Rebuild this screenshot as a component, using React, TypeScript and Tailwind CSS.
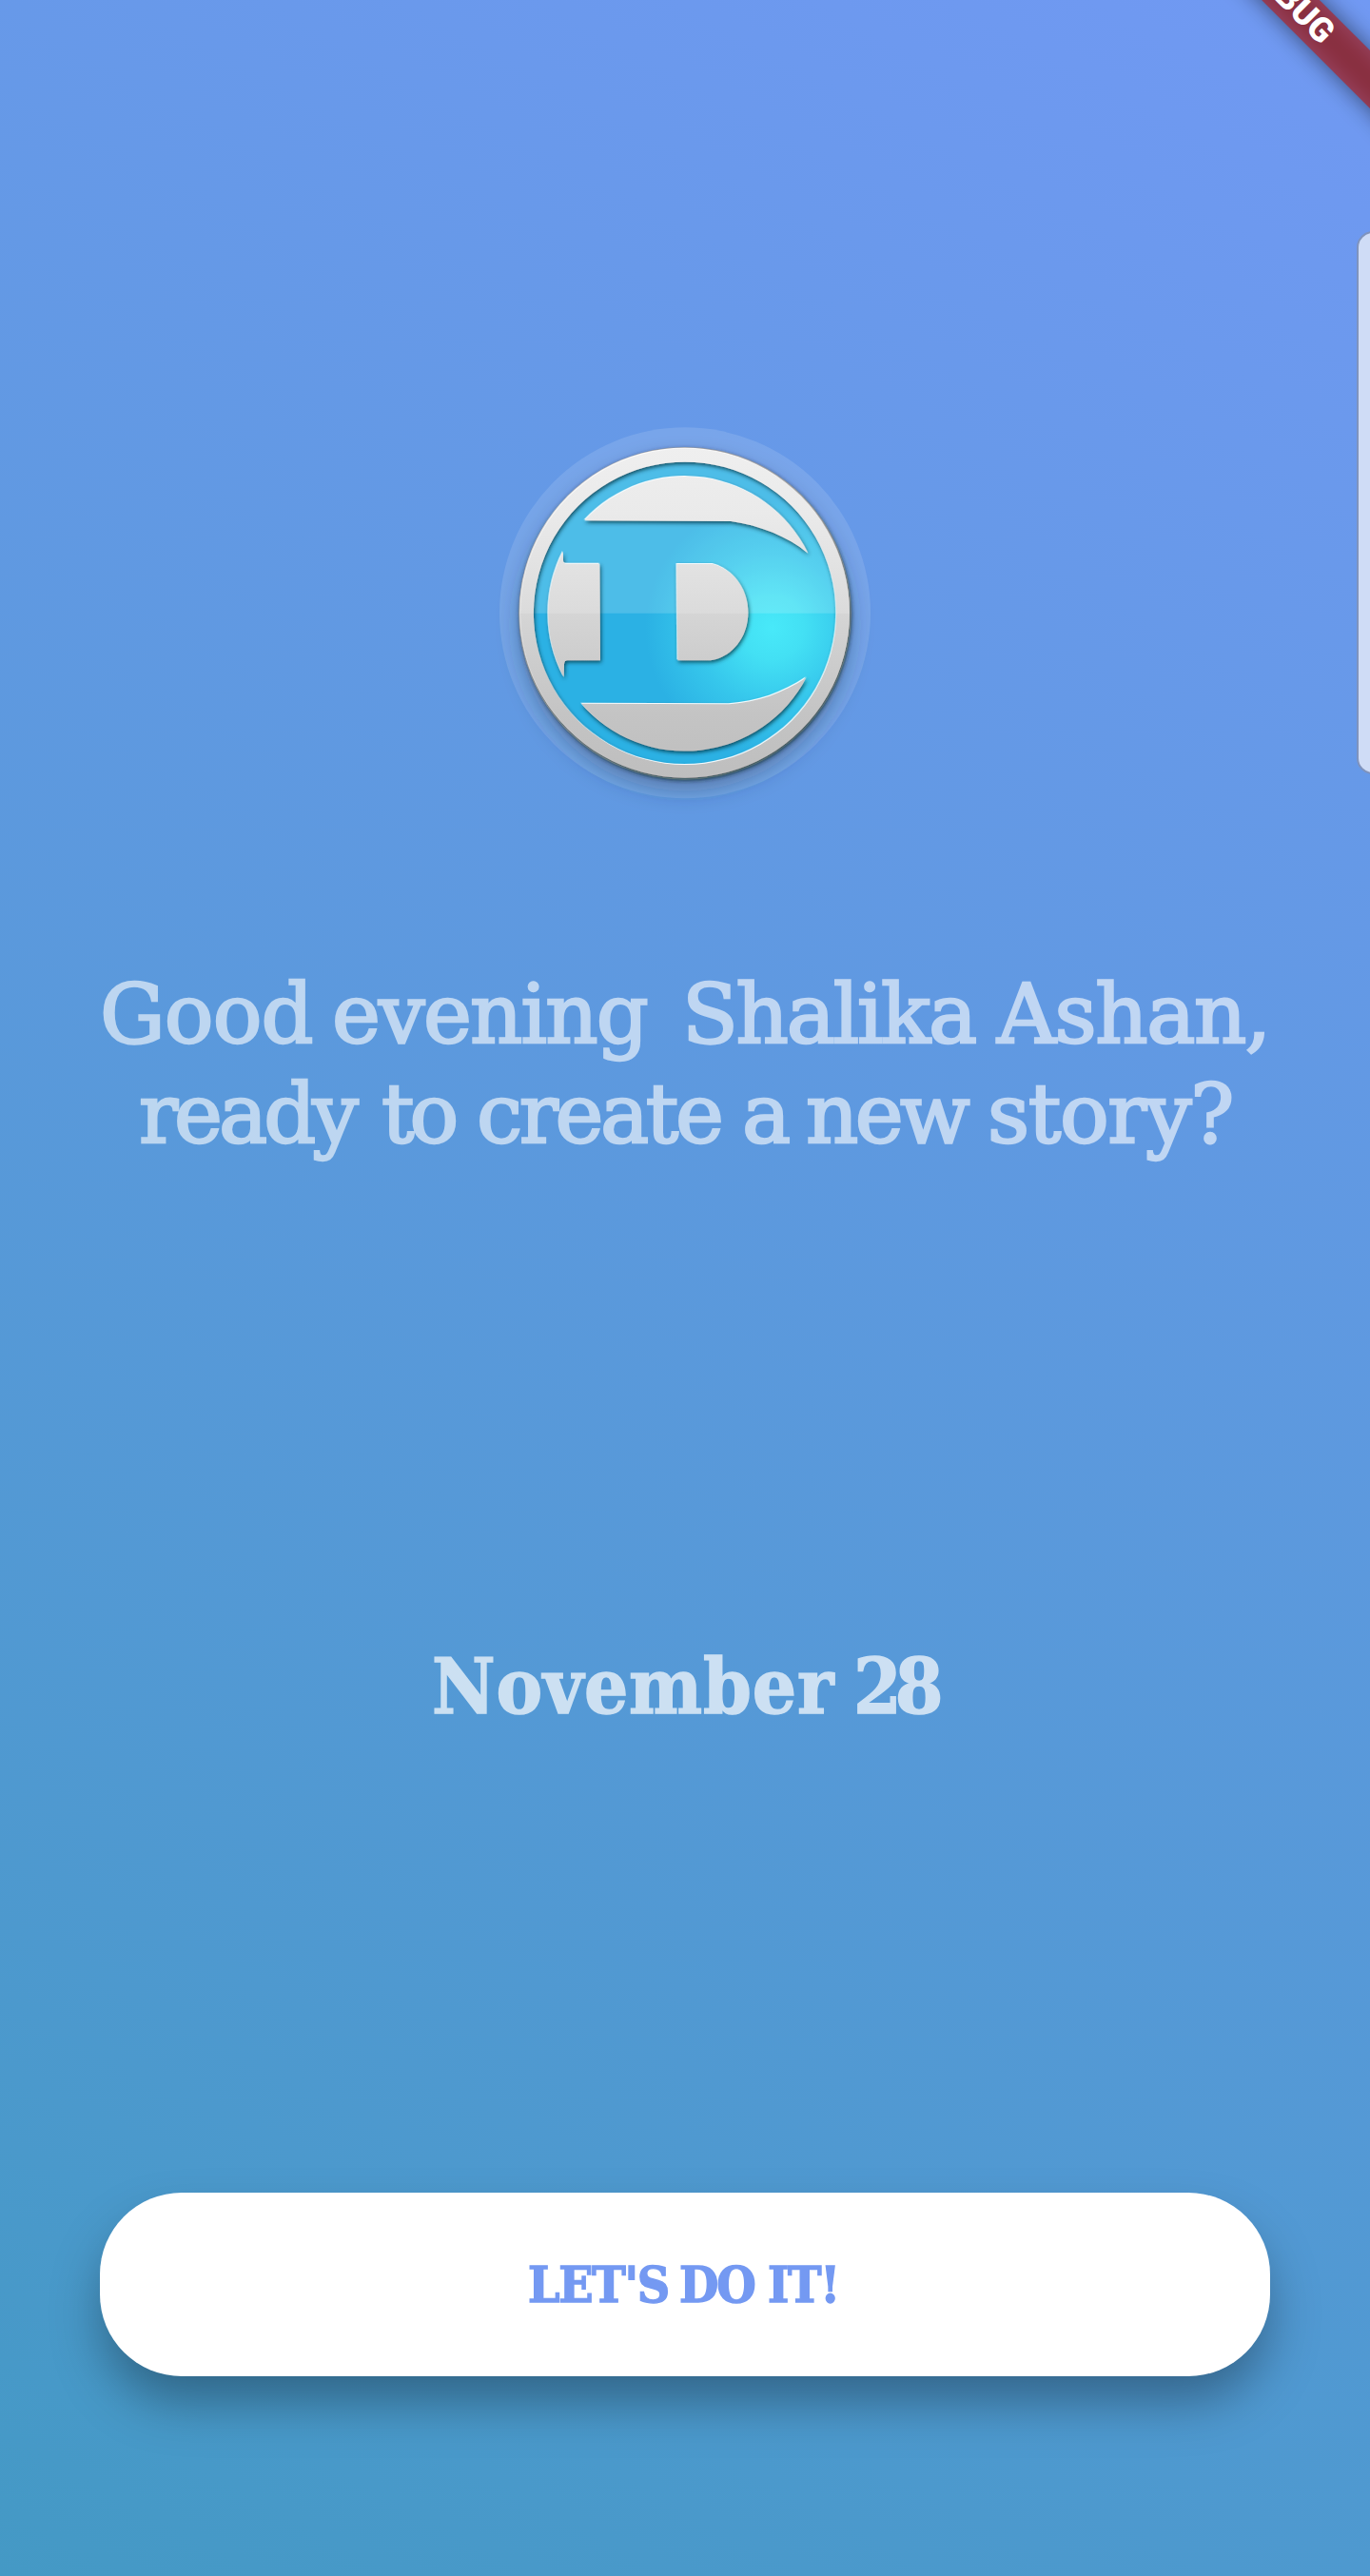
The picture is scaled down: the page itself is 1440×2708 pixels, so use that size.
const RIM =
  "M630 125 A519 519 0 1 1 629.9 125 Z M630 167 A477.5 477.5 0 1 0 630.1 167 Z";

function Logo() {
  return (
    <svg className="block h-[390px] w-[390px] overflow-visible" viewBox="45 57 1170 1170">
      <defs>
        <linearGradient id="metal" gradientUnits="userSpaceOnUse" x1="0" y1="120" x2="0" y2="1168">
          <stop offset="0" stopColor="#efefef" />
          <stop offset="0.2" stopColor="#eaeaea" />
          <stop offset="0.5" stopColor="#dbdbdb" />
          <stop offset="0.5" stopColor="#d5d5d5" />
          <stop offset="0.8" stopColor="#c4c4c4" />
          <stop offset="1" stopColor="#bebebe" />
        </linearGradient>
        <radialGradient id="glow" gradientUnits="userSpaceOnUse" cx="905" cy="690" r="400">
          <stop offset="0" stopColor="#48e9f9" />
          <stop offset="0.25" stopColor="#43e0f4" />
          <stop offset="0.6" stopColor="#36c7ec" />
          <stop offset="1" stopColor="#2bb1e4" />
        </radialGradient>
        <filter id="relief" x="-10%" y="-10%" width="120%" height="125%">
          <feDropShadow dx="-2" dy="-3" stdDeviation="0.6" floodColor="#ffffff" floodOpacity="0.95" result="light" />
          <feGaussianBlur in="SourceAlpha" stdDeviation="6" result="blur" />
          <feOffset in="blur" dx="4" dy="6" result="moved" />
          <feFlood floodColor="#00303c" floodOpacity="0.8" />
          <feComposite in2="moved" operator="in" result="dark" />
          <feMerge>
            <feMergeNode in="dark" />
            <feMergeNode in="light" />
          </feMerge>
        </filter>
        <filter id="soft" x="-30%" y="-30%" width="160%" height="160%">
          <feGaussianBlur stdDeviation="34" />
        </filter>
        <filter id="rimShade" x="-10%" y="-10%" width="120%" height="120%">
          <feGaussianBlur stdDeviation="6" />
        </filter>
      </defs>
      <circle cx="630" cy="643" r="585" fill="#fff" fillOpacity="0.12" />
      <circle cx="630" cy="680" r="524" fill="#1c2f50" fillOpacity="0.36" filter="url(#soft)" />
      <circle cx="631" cy="647" r="524" fill="#333" fillOpacity="0.45" filter="url(#rimShade)" />
      <circle cx="630" cy="644.5" r="524.5" fill="#a8a8aa" />
      <circle cx="630" cy="644.5" r="500" fill="url(#glow)" />
      <path d="M140 644.5 A490 490 0 0 1 1120 644.5 Z" fill="#fff" fillOpacity="0.16" />
      <g fill="url(#metal)">
        <path d={RIM} fillRule="evenodd" filter="url(#relief)" />
        <path d="M313 352 A432 432 0 0 1 1018 455 C955 402 865 367 775 354 Z" filter="url(#relief)" />
        <path d="M303 929 L770 931 C860 924 938 897 1013 847 A432 432 0 0 1 303 929 Z" filter="url(#relief)" />
        <path d="M246 449 A432 432 0 0 0 248 846 L249 806 Q249 793 260 793 L363 793 L361 488 L254 488 Q246 488 246 478 Z" filter="url(#relief)" />
        <path d="M604 489 L718 489 C784 506 829 570 829 643 C829 718 780 783 710 793 L607 793 Z" filter="url(#relief)" />
      </g>
    </svg>
  );
}

function DebugRibbon() {
  return (
    <div className="absolute top-0 right-0 h-[180px] w-[200px] overflow-hidden">
      <div className="absolute top-[-22px] left-[-84px] h-[43px] w-[400px] rotate-45">
        <div className="absolute inset-0 bg-black/50 blur-[12px]" />
        <div className="relative flex h-full items-center justify-center bg-[#b71c1c]/63 font-['Roboto'] text-[35.7px] leading-none font-black text-white">
          DEBUG
        </div>
      </div>
    </div>
  );
}

export default function App() {
  return (
    <main className="relative flex h-[2708px] w-[1440px] flex-col items-center overflow-hidden bg-[linear-gradient(208deg,#7199f3,#4499c5)] pt-[449px] font-['DejaVu_Serif',serif]">
      <DebugRibbon />
      <div className="absolute top-[243px] right-[-20px] h-[571px] w-[34px] rounded-[17px] border-2 border-[#7f93bd] bg-[#cfdcf6]" />

      <Logo />

      <h1 className="mt-[175px] h-[210px] w-full text-[86px] leading-[105px] font-normal whitespace-nowrap text-white opacity-60 [-webkit-text-stroke:2.4px_white]">
        <div className="flex pl-[105px]">
          <span className="w-[244px] tracking-[-0.9px]">Good </span>
          <span className="w-[368px] tracking-[-1.8px]">evening </span>
          <span className="w-[331px] tracking-[-2.3px]">Shalika </span>
          <span className="tracking-[-1.5px]">Ashan,</span>
        </div>
        <div className="flex pl-[146px]">
          <span className="w-[255px] tracking-[-4px]">ready </span>
          <span className="w-[100px] tracking-[-5px]">to </span>
          <span className="w-[279px] tracking-[-3.4px]">create </span>
          <span className="w-[67px]">a </span>
          <span className="w-[191px] tracking-[-3.7px]">new </span>
          <span className="tracking-[-1.4px]">story?</span>
        </div>
      </h1>

      <h2 className="mt-[499px] flex h-[100px] w-full pl-[454px] font-['DejaVu_Serif_Condensed','DejaVu_Serif',serif] text-[81px] leading-[100px] font-bold whitespace-nowrap text-white opacity-70 [-webkit-text-stroke:1.4px_white]">
        <span className="w-[443px] tracking-[0.8px]">November </span>
        <span className="tracking-[-7px]">28</span>
      </h2>

      <button className="mt-[482px] flex h-[193px] w-[1230px] rounded-[86px] bg-white pl-[450px] text-left font-['DejaVu_Serif_Condensed','DejaVu_Serif',serif] text-[53px] leading-[192px] font-bold whitespace-nowrap text-[#7499f2] shadow-[0_30px_54px_-4px_rgba(0,0,0,0.34)] [-webkit-text-stroke:1.4px_#7499f2]">
        <span className="w-[159px] tracking-[-1.3px]">LET'S </span>
        <span className="w-[93px] tracking-[-2px]">DO </span>
        <span className="tracking-[-1.3px]">IT!</span>
      </button>
    </main>
  );
}
